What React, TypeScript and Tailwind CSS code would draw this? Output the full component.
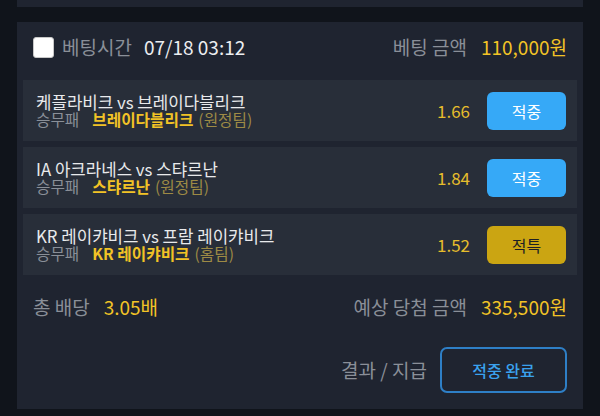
const font = { fontFamily: '"Noto Sans CJK KR", "Noto Sans", sans-serif' };

type Bet = {
  title: string;
  market: string;
  pick: string;
  side: string;
  odds: string;
  result: 'hit' | 'special';
};

const bets: Bet[] = [
  { title: '케플라비크 vs 브레이다블리크', market: '승무패', pick: '브레이다블리크', side: '(원정팀)', odds: '1.66', result: 'hit' },
  { title: 'IA 아크라네스 vs 스탸르난', market: '승무패', pick: '스탸르난', side: '(원정팀)', odds: '1.84', result: 'hit' },
  { title: 'KR 레이캬비크 vs 프람 레이캬비크', market: '승무패', pick: 'KR 레이캬비크', side: '(홈팀)', odds: '1.52', result: 'special' },
];

function BetRow({ bet }: { bet: Bet }) {
  return (
    <div className="h-[61px] bg-[#282e39] flex items-center pl-[13px] pr-[11px]">
      <div className="flex-1 flex flex-col">
        <div className="text-[16.8px] leading-[18px] text-[#e9eaec]">{bet.title}</div>
        <div className="flex items-center text-[15.7px] leading-[18px]">
          <span className="text-[#8a8f98]">{bet.market}</span>
          <span className="ml-[13px] font-bold text-[#f2c326]">{bet.pick}</span>
          <span className="ml-[5px] text-[#9d8a45]">{bet.side}</span>
        </div>
      </div>
      <span className="text-[17px] text-[#e6bd2c] mr-[17px]">{bet.odds}</span>
      {bet.result === 'hit' ? (
        <div className="w-[79px] h-[38px] rounded-[6px] bg-[#36a9f7] text-white text-[16px] flex items-center justify-center">
          적중
        </div>
      ) : (
        <div className="w-[79px] h-[38px] rounded-[6px] bg-[#cba512] text-[#1d1f24] text-[16px] flex items-center justify-center">
          적특
        </div>
      )}
    </div>
  );
}

export default function App() {
  return (
    <div className="w-[600px] h-[416px] bg-[#10141b] overflow-hidden px-[17px]" style={font}>
      {/* previous card bottom */}
      <div className="h-[7px] bg-[#1f2430]" />

      <div className="mt-[15px] bg-[#1f2430] h-[387px] px-[6px] flex flex-col">
        {/* header */}
        <div className="h-[50px] flex items-center px-[10px] text-[19px]">
          <div className="w-[21px] h-[21px] bg-white rounded-[3px] border border-[#c8c8c8]" />
          <span className="ml-[8px] text-[#8a8f98]">베팅시간</span>
          <span className="ml-[12px] text-[#eceef0]">07/18 03:12</span>
          <span className="ml-auto text-[#8a8f98]">베팅 금액</span>
          <span className="ml-[14px] text-[#f2c326]">110,000원</span>
        </div>

        <div className="mt-[8px] flex flex-col gap-[6px]">
          {bets.map((b) => (
            <BetRow key={b.title} bet={b} />
          ))}
        </div>

        {/* totals */}
        <div className="mt-[19px] flex items-center px-[10px] text-[19px] h-[26px]">
          <span className="text-[#8a8f98]">총 배당</span>
          <span className="ml-[14px] text-[#f2c326]">3.05배</span>
          <span className="ml-auto text-[#8a8f98]">예상 당첨 금액</span>
          <span className="ml-[14px] text-[#f2c326]">335,500원</span>
        </div>

        {/* result */}
        <div className="mt-[27px] flex items-center justify-end pr-[10px]">
          <span className="text-[19px] text-[#8a8f98]">결과 / 지급</span>
          <div className="ml-[13px] w-[127px] h-[46px] rounded-[7px] border-2 border-[#2e7fc6] flex items-center justify-center text-[16px] font-medium text-[#3aa2ee]">
            적중 완료
          </div>
        </div>
      </div>
    </div>
  );
}
